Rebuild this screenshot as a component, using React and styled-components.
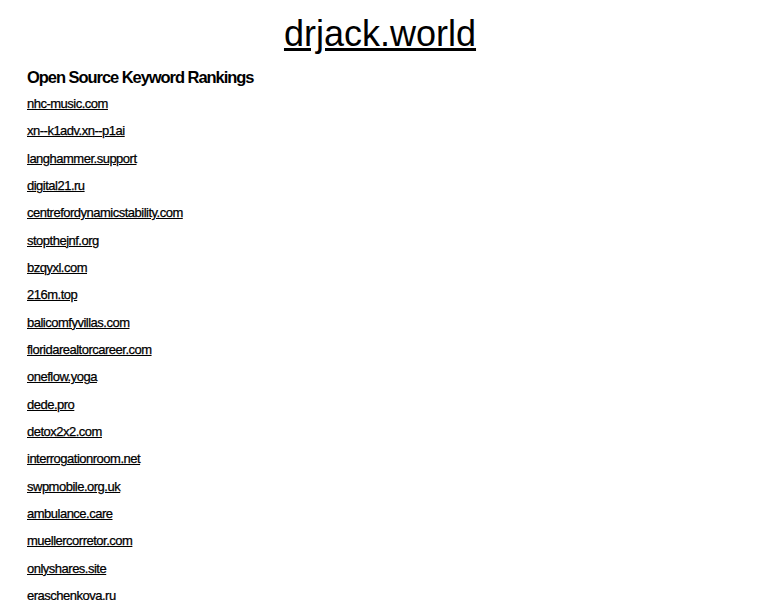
import React from "react";
import styled, { createGlobalStyle } from "styled-components";

const domains = [
  "nhc-music.com",
  "xn--k1adv.xn--p1ai",
  "langhammer.support",
  "digital21.ru",
  "centrefordynamicstability.com",
  "stopthejnf.org",
  "bzqyxl.com",
  "216m.top",
  "balicomfyvillas.com",
  "floridarealtorcareer.com",
  "oneflow.yoga",
  "dede.pro",
  "detox2x2.com",
  "interrogationroom.net",
  "swpmobile.org.uk",
  "ambulance.care",
  "muellercorretor.com",
  "onlyshares.site",
  "eraschenkova.ru",
];

function App() {
  return (
    <>
      <GlobalStyle />
      <Page>
        <SiteTitle href="#">drjack.world</SiteTitle>
        <Heading>Open Source Keyword Rankings</Heading>
        <List>
          {domains.map((d) => (
            <Item key={d}>
              <DomainLink href="#">{d}</DomainLink>
            </Item>
          ))}
        </List>
      </Page>
    </>
  );
}

const GlobalStyle = createGlobalStyle`
  body {
    margin: 0;
    background: #fff;
    font-family: "Liberation Sans", Arial, sans-serif;
    color: #000;
  }
`;

const Page = styled.div`
  padding: 12px 27px 0;
  display: flex;
  flex-direction: column;
`;

const SiteTitle = styled.a`
  align-self: center;
  font-size: 36px;
  line-height: 44px;
  color: #000;
  text-decoration: underline;
`;

const Heading = styled.h2`
  margin: 10px 0 2px;
  font-size: 16.5px;
  line-height: 22px;
  font-weight: bold;
  letter-spacing: -1.05px;
`;

const List = styled.ul`
  list-style: none;
  margin: 0;
  padding: 0;
`;

const Item = styled.li`
  height: 27.33px;
  display: flex;
  align-items: center;
`;

const DomainLink = styled.a`
  font-size: 13px;
  letter-spacing: -0.5px;
  color: #000;
  text-decoration: underline;
  -webkit-text-stroke: 0.25px #000;
`;

export default App;
